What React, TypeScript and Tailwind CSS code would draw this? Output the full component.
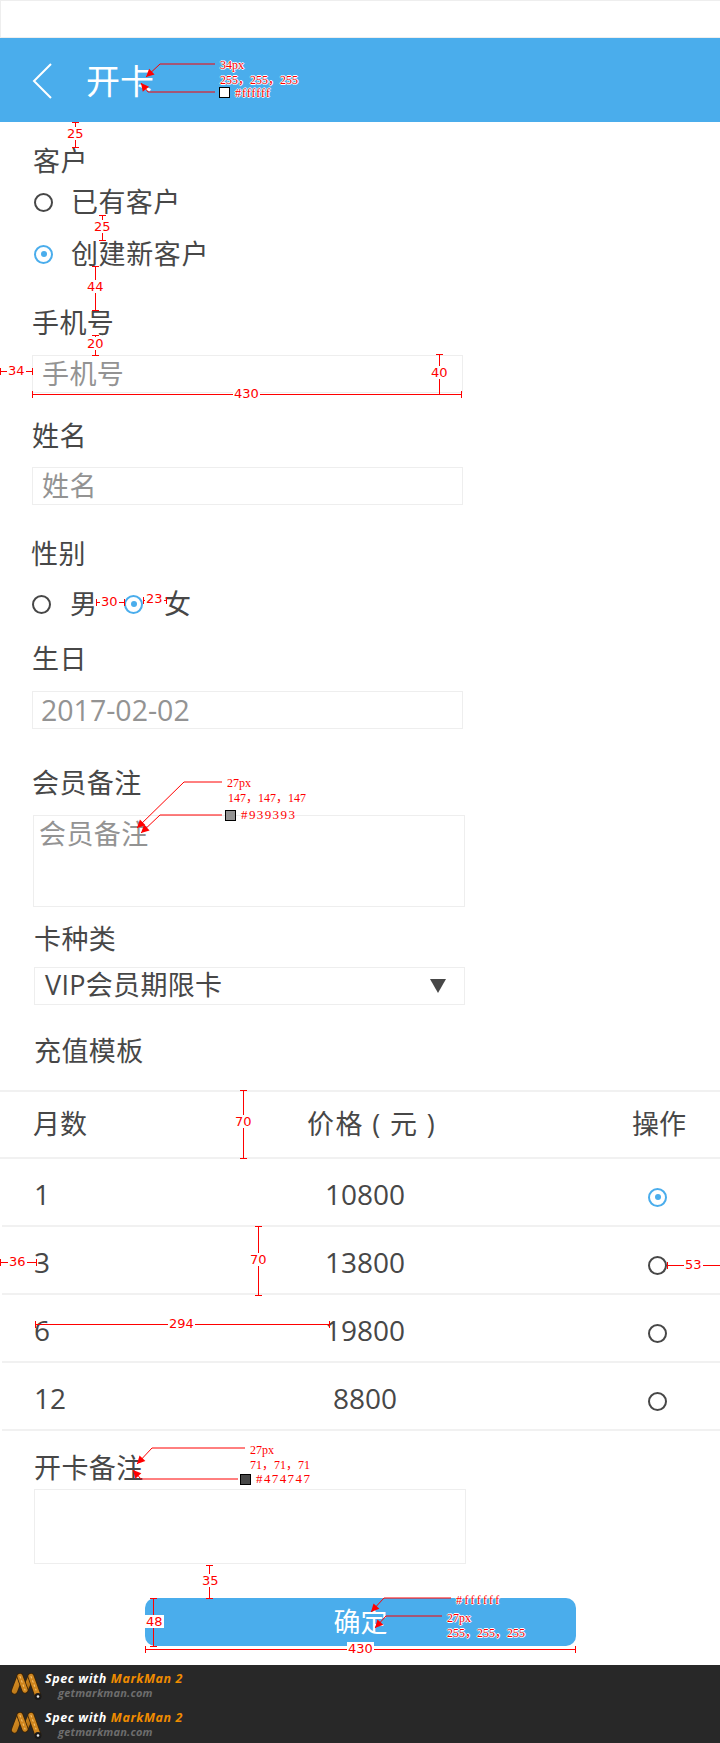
import React from 'react';

const Radio = ({ on = false }: { on?: boolean }) => (
  <span
    className={
      'flex h-[19px] w-[19px] shrink-0 items-center justify-center rounded-full border-2 ' +
      (on ? 'border-[#4aadec]' : 'border-[#474747]')
    }
  >
    {on && <span className="h-[6px] w-[6px] rounded-full bg-[#4aadec]" />}
  </span>
);

const Label = ({ text, className = '' }: { text: string; className?: string }) => (
  <div className={'h-[36px] text-[27px] leading-[36px] tracking-[0.4px] text-[#474747] ' + className}>{text}</div>
);

const Box = ({ text, className = '' }: { text?: string; className?: string }) => (
  <div className={'border border-[#eeeeee] text-[27px] leading-[36px] tracking-[0.4px] text-[#939393] ' + className}>{text}</div>
);

const rows = [
  { months: '1', price: '10800', on: true },
  { months: '3', price: '13800', on: false },
  { months: '6', price: '19800', on: false },
  { months: '12', price: '8800', on: false },
];

const MarkLogo = ({ id }: { id: string }) => (
  <svg width="33" height="29" viewBox="0 0 33 29" className="shrink-0">
    <defs>
      <linearGradient id={id} x1="0" y1="0" x2="1" y2="1">
        <stop offset="0" stopColor="#dd9226" />
        <stop offset="1" stopColor="#a86a12" />
      </linearGradient>
    </defs>
    <path d="M3.5 19 9 4.5M14 18 20 4.5" fill="none" stroke="#3a2408" strokeWidth="6.8" strokeLinecap="round" />
    <path d="M3.5 19 9 4.5M14 18 20 4.5" fill="none" stroke={`url(#${id})`} strokeWidth="5.2" strokeLinecap="round" />
    <path d="M9 4.5 14 18M20 4.5 27 24" fill="none" stroke="#3a2408" strokeWidth="6.8" strokeLinecap="round" />
    <path d="M9 4.5 14 18M20 4.5 27 24" fill="none" stroke="#cf861f" strokeWidth="5.2" strokeLinecap="round" />
    <path d="M9 4.5 14 18M20 4.5 25 18" fill="none" stroke="#f6c26c" strokeWidth="1.1" strokeLinecap="round" strokeDasharray="1.5 3" />
    <circle cx="27" cy="24.5" r="3.4" fill="#191919" />
    <circle cx="27" cy="24.5" r="1.3" fill="#e6e6e6" />
  </svg>
);

const Promo = ({ id }: { id: string }) => (
  <div className="flex h-[39px] items-start pl-[11px] pt-[7px]">
    <MarkLogo id={id} />
    <div className="ml-[1px] font-['Open_Sans',sans-serif] italic">
      <div className="h-[14px] text-[12.5px] font-bold leading-[14px] tracking-[0.6px] text-white">
        Spec with <span className="text-[#f08c00]">MarkMan 2</span>
      </div>
      <div className="ml-[13px] text-[11px] font-bold leading-[13px] tracking-[0.2px] text-[#6d6d6d]">
        getmarkman.com
      </div>
    </div>
  </div>
);

// 标注层 spec overlay
type Seg = [number, number, number, number];
const dims: Seg[] = [
  [75, 122, 75, 147],
  [102, 215, 102, 240],
  [95, 266, 95, 310],
  [95, 335, 95, 355],
  [0, 371, 32, 371],
  [439, 354, 439, 394],
  [32, 394, 461, 394],
  [96, 602, 124, 602],
  [143, 600, 166, 600],
  [243, 1090, 243, 1158],
  [258, 1226, 258, 1295],
  [0, 1262, 36, 1262],
  [667, 1265, 720, 1265],
  [35, 1324, 329, 1324],
  [209, 1565, 209, 1598],
  [153, 1598, 153, 1646],
  [145, 1649, 575, 1649],
];
// path, elbow point, arrow tip
const leaders: [string, number, number, number, number][] = [
  ['M215 64H160L146 77', 160, 64, 146, 77],
  ['M215 92H148L141 83', 148, 92, 141, 83],
  ['M222 782H184L137 828', 184, 782, 137, 828],
  ['M222 815H160L141 833', 160, 815, 141, 833],
  ['M245 1448H152L137 1464', 152, 1448, 137, 1464],
  ['M238 1479H141L133 1470', 141, 1479, 133, 1470],
  ['M451 1598H384L371 1612', 384, 1598, 371, 1612],
  ['M442 1616H386L375 1628', 386, 1616, 375, 1628],
];

const Overlay = () => (
  <svg className="pointer-events-none absolute left-0 top-0" width="720" height="1743">
    {dims.map(([a, b, c, d], i) => (
      <g key={i} stroke="#ff0000" strokeWidth="1" shapeRendering="crispEdges">
        <line x1={a} y1={b} x2={c} y2={d} />
        {a === c ? (
          <>
            <line x1={a - 3} y1={b} x2={a + 4} y2={b} />
            <line x1={c - 3} y1={d} x2={c + 4} y2={d} />
          </>
        ) : (
          <>
            <line x1={a} y1={b - 3} x2={a} y2={b + 4} />
            <line x1={c} y1={d - 3} x2={c} y2={d + 4} />
          </>
        )}
      </g>
    ))}
    {leaders.map(([d, ex, ey, x, y], i) => {
      const deg = (Math.atan2(y - ey, x - ex) * 180) / Math.PI;
      return (
        <g key={i}>
          <path d={d} fill="none" stroke="#ff0000" strokeWidth="1" />
          <path d="M0 0-8-4V4Z" fill="#ff0000" transform={`translate(${x} ${y}) rotate(${deg})`} />
        </g>
      );
    })}
  </svg>
);

const DimText = ({ text, className }: { text: string; className: string }) => (
  <span className={"absolute bg-white px-[1px] font-['DejaVu_Sans',sans-serif] text-[13px] leading-[13px] text-[#ff0000] " + className}>
    {text}
  </span>
);

const NoteText = ({ text, className }: { text: string; className: string }) => (
  <span className={"absolute whitespace-nowrap font-['Liberation_Serif','Noto_Sans_CJK_SC',serif] text-[12px] leading-[12px] text-[#ff0000] " + className}>
    {text}
  </span>
);

const halo = '[text-shadow:1px_0_0_#fff,-1px_0_0_#fff,0_1px_0_#fff,0_-1px_0_#fff]';

export default function App() {
  return (
    <div className="relative h-[1743px] w-[720px] overflow-hidden bg-white font-['Open_Sans','Noto_Sans_CJK_SC',sans-serif]">
      <div className="h-[38px] border-b border-l border-t border-[#eeeeee]" />
      <div className="flex h-[84px] items-center bg-[#4aadec] pl-[32px]">
        <svg width="20" height="36" viewBox="0 0 20 36" fill="none" className="mt-[2px]">
          <path d="M19 1 2 18l17 17" stroke="#ffffff" strokeWidth="2" />
        </svg>
        <span className="ml-[34px] mt-[2px] text-[34px] leading-[40px] text-white">开卡</span>
      </div>

      <div className="pl-[34px]">
        <Label text="客户" className="ml-[-1px] mt-[21px]" />
        <div className="mt-[5px] flex h-[36px] items-center">
          <Radio />
          <span className="ml-[18px] text-[27px] leading-[36px] tracking-[0.4px] text-[#474747]">已有客户</span>
        </div>
        <div className="mt-[16px] flex h-[36px] items-center">
          <Radio on />
          <span className="ml-[18px] text-[27px] leading-[36px] tracking-[0.6px] text-[#474747]">创建新客户</span>
        </div>
      </div>

      <div className="pl-[32px]">
        <Label text="手机号" className="mt-[33px]" />
        <Box text="手机号" className="mt-[14px] h-[38px] w-[431px] pl-[9px]" />
        <Label text="姓名" className="mt-[25px]" />
        <Box text="姓名" className="mt-[13px] h-[38px] w-[431px] pl-[9px]" />
        <Label text="性别" className="ml-[-1px] mt-[31px]" />
        <div className="mt-[14px] flex h-[36px] items-center">
          <Radio />
          <span className="ml-[19px] text-[27px] leading-[36px] text-[#474747]">男</span>
          <span className="ml-[27px]">
            <Radio on />
          </span>
          <span className="ml-[21px] text-[27px] leading-[36px] text-[#474747]">女</span>
        </div>
        <Label text="生日" className="mt-[19px]" />
        <Box text="2017-02-02" className="mt-[14px] h-[38px] w-[431px] pl-[8px] text-[28.5px] leading-[34px] tracking-[0px]" />
        <Label text="会员备注" className="mt-[36px]" />
        <Box text="会员备注" className="ml-[1px] mt-[14px] h-[92px] w-[432px] pl-[5px]" />
      </div>

      <div className="pl-[34px]">
        <Label text="卡种类" className="mt-[14px]" />
        <div className="mt-[10px] flex h-[38px] w-[431px] items-center justify-between border border-[#eeeeee] pb-[3px] pl-[10px] pr-[18px] text-[27px] leading-[32px] tracking-[0.3px] text-[#474747]">
          <span>VIP会员期限卡</span>
          <svg width="16" height="14" viewBox="0 0 16 14" className="mt-[2px]">
            <path d="M0 0h16L8 14z" fill="#474747" />
          </svg>
        </div>
        <Label text="充值模板" className="mt-[28px]" />
      </div>

      <div className="mt-[21px] text-[27px] text-[#474747]">
        <div className="flex h-[69px] items-center border-b-2 border-t-2 border-[#f1f1f1] pl-[33px]">
          <span className="w-[274px]">月数</span>
          <span className="w-[325px] whitespace-pre tracking-[1.4px]">价格 ( 元 )</span>
          <span>操作</span>
        </div>
        {rows.map((r) => (
          <div key={r.months} className="ml-[2px] flex h-[68px] items-center border-b-2 border-[#f1f1f1] pl-[32px]">
            <span className="w-[261px] pt-[4px] text-[28px]">{r.months}</span>
            <span className="w-[140px] pt-[4px] text-center text-[28px]">{r.price}</span>
            <span className="ml-[213px] pt-[10px]">
              <Radio on={r.on} />
            </span>
          </div>
        ))}
      </div>

      <div className="pl-[34px]">
        <Label text="开卡备注" className="mt-[19px]" />
        <Box className="mt-[3px] h-[75px] w-[432px]" />
      </div>

      <div className="ml-[145px] mt-[34px] flex h-[48px] w-[431px] items-center justify-center rounded-[10px] bg-[#4aadec] text-[27px] leading-[36px] text-white">
        确定
      </div>

      <div className="mt-[19px] h-[78px] bg-[#282828]">
        <Promo id="mm-a" />
        <Promo id="mm-b" />
      </div>

      <Overlay />

      <DimText text="25" className="left-[66px] top-[127px]" />
      <DimText text="25" className="left-[93px] top-[220px]" />
      <DimText text="44" className="left-[86px] top-[280px]" />
      <DimText text="20" className="left-[86px] top-[337px]" />
      <DimText text="34" className="left-[7px] top-[364px]" />
      <DimText text="40" className="left-[430px] top-[366px]" />
      <DimText text="430" className="left-[233px] top-[387px]" />
      <DimText text="30" className="left-[100px] top-[595px]" />
      <DimText text="23" className="left-[145px] top-[592px]" />
      <DimText text="70" className="left-[234px] top-[1115px]" />
      <DimText text="70" className="left-[249px] top-[1253px]" />
      <DimText text="36" className="left-[8px] top-[1255px]" />
      <DimText text="53" className="left-[684px] top-[1258px]" />
      <DimText text="294" className="left-[168px] top-[1317px]" />
      <DimText text="35" className="left-[201px] top-[1574px]" />
      <DimText text="48" className="left-[145px] top-[1615px] bg-transparent" />
      <DimText text="430" className="left-[347px] top-[1642px]" />

      <NoteText text="34px" className={'left-[220px] top-[59px] ' + halo} />
      <NoteText text="255，255，255" className={'left-[220px] top-[74px] ' + halo} />
      <span className="absolute left-[219px] top-[87px] h-[11px] w-[11px] border border-black bg-white" />
      <NoteText text="#ffffff" className={'left-[235px] top-[87px] tracking-[1px] ' + halo} />

      <NoteText text="27px" className="left-[227px] top-[777px]" />
      <NoteText text="147，147，147" className="left-[228px] top-[792px]" />
      <span className="absolute left-[225px] top-[810px] h-[11px] w-[11px] border border-black bg-[#939393]" />
      <NoteText text="#939393" className="left-[241px] top-[809px] text-[13px] tracking-[1.4px]" />

      <NoteText text="27px" className="left-[250px] top-[1444px]" />
      <NoteText text="71，71，71" className="left-[250px] top-[1459px]" />
      <span className="absolute left-[240px] top-[1474px] h-[11px] w-[11px] border border-black bg-[#474747]" />
      <NoteText text="#474747" className="left-[256px] top-[1473px] text-[13px] tracking-[1.4px]" />

      <NoteText text="#ffffff" className={'left-[456px] top-[1594px] tracking-[2.4px] ' + halo} />
      <NoteText text="27px" className={'left-[447px] top-[1612px] ' + halo} />
      <NoteText text="255，255，255" className={'left-[447px] top-[1627px] ' + halo} />
    </div>
  );
}
